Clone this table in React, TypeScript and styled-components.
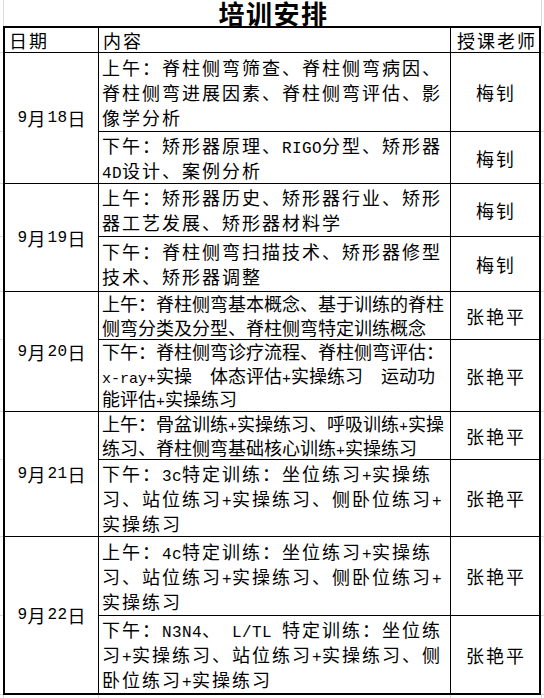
import React from 'react'
import styled, { createGlobalStyle } from 'styled-components'

const GRID = '#d9d9d9'
const CJK = '"Noto Sans CJK SC", "Noto Sans", sans-serif'

type Session = { lines: string[]; teacher: string; height: number; tight?: boolean }
type Day = { date: string; sessions: Session[] }

const days: Day[] = [
    {
        date: '9月18日',
        sessions: [
            { height: 78, teacher: '梅钊', lines: ['上午：脊柱侧弯筛查、脊柱侧弯病因、', '脊柱侧弯进展因素、脊柱侧弯评估、影', '像学分析'] },
            { height: 51, teacher: '梅钊', lines: ['下午：矫形器原理、RIGO分型、矫形器', '4D设计、案例分析'] },
        ],
    },
    {
        date: '9月19日',
        sessions: [
            { height: 52, teacher: '梅钊', lines: ['上午：矫形器历史、矫形器行业、矫形', '器工艺发展、矫形器材料学'] },
            { height: 54, teacher: '梅钊', lines: ['下午：脊柱侧弯扫描技术、矫形器修型', '技术、矫形器调整'] },
        ],
    },
    {
        date: '9月20日',
        sessions: [
            { height: 47, teacher: '张艳平', tight: true, lines: ['上午：脊柱侧弯基本概念、基于训练的脊柱', '侧弯分类及分型、脊柱侧弯特定训练概念'] },
            { height: 71, teacher: '张艳平', tight: true, lines: ['下午：脊柱侧弯诊疗流程、脊柱侧弯评估：', 'x-ray+实操  体态评估+实操练习  运动功', '能评估+实操练习'] },
        ],
    },
    {
        date: '9月21日',
        sessions: [
            { height: 47, teacher: '张艳平', tight: true, lines: ['上午：骨盆训练+实操练习、呼吸训练+实操', '练习、脊柱侧弯基础核心训练+实操练习'] },
            { height: 76, teacher: '张艳平', lines: ['下午：3c特定训练：坐位练习+实操练', '习、站位练习+实操练习、侧卧位练习+', '实操练习'] },
        ],
    },
    {
        date: '9月22日',
        sessions: [
            { height: 78, teacher: '张艳平', lines: ['上午：4c特定训练：坐位练习+实操练', '习、站位练习+实操练习、侧卧位练习+', '实操练习'] },
            { height: 77, teacher: '张艳平', lines: ['下午：N3N4、 L/TL 特定训练：坐位练', '习+实操练习、站位练习+实操练习、侧', '卧位练习+实操练习'] },
        ],
    },
]

const HEADER_H = 24
const sessionHeights = days.flatMap(d => d.sessions.map(s => s.height))

const GlobalStyle = createGlobalStyle`
    html, body {
        margin: 0;
        padding: 0;
        background: #fff;
    }
    body {
        font-family: ${CJK};
        color: #000;
    }
`

const Sheet = styled.div`
    width: 544px;
    height: 698px;
`

const Title = styled.div`
    box-sizing: border-box;
    margin-left: 3px;
    width: 539px;
    height: 26px;
    border-left: 1px solid ${GRID};
    border-right: 1px solid ${GRID};
    text-align: center;
    font-size: 26px;
    line-height: 26px;
    font-weight: 700;
    letter-spacing: 1.5px;
    padding-left: 2px;
`

const Middle = styled.div`
    display: flex;
`

const Gutter = styled.div`
    width: 3px;
    display: flex;
    flex-direction: column;
`

const GutterCell = styled.div<{ $h: number }>`
    box-sizing: border-box;
    height: ${p => p.$h}px;
    border-bottom: 1px solid ${GRID};
`

const Table = styled.div<{ $rows: string }>`
    display: grid;
    grid-template-columns: 93px 351px 88px;
    grid-template-rows: ${p => p.$rows};
    gap: 1px;
    background: #000;
    border: 2px solid #000;
`

const Cell = styled.div`
    background: #fff;
    font-size: 18px;
    letter-spacing: 2px;
    white-space: nowrap;
`

const HeadCell = styled(Cell)<{ $center?: boolean }>`
    display: flex;
    align-items: center;
    justify-content: ${p => (p.$center ? 'center' : 'flex-start')};
    padding-left: 4px;
    line-height: 24px;
`

const DateCell = styled(Cell)<{ $span: number }>`
    grid-row: span ${p => p.$span};
    display: flex;
    align-items: center;
    justify-content: center;
    padding-left: 2px;
`

const TeacherCell = styled(Cell)`
    display: flex;
    align-items: center;
    justify-content: center;
    padding-left: 2px;
`

const ContentCell = styled(Cell)<{ $tight?: boolean }>`
    display: flex;
    flex-direction: column;
    justify-content: center;
    padding-left: 3px;
    letter-spacing: ${p => (p.$tight ? '0px' : '2px')};
`

const Line = styled.div<{ $tight?: boolean }>`
    line-height: ${p => (p.$tight ? '23.5px' : '25px')};
    height: ${p => (p.$tight ? '23.5px' : '25px')};
    flex-shrink: 0;
`

const Half = styled.span<{ $tight?: boolean }>`
    font-family: "Liberation Mono", "DejaVu Sans Mono", monospace;
    font-size: ${p => (p.$tight ? '15px' : '16px')};
    letter-spacing: ${p => (p.$tight ? '0px' : '0.4px')};
    white-space: pre;
`

const Bottom = styled.div`
    box-sizing: border-box;
    margin-left: 3px;
    width: 539px;
    height: 3px;
    display: grid;
    grid-template-columns: 95px 352px 91px;
    border-left: 1px solid ${GRID};
`

const BottomCell = styled.div`
    border-right: 1px solid ${GRID};
`

function Runs({ text, tight }: { text: string; tight?: boolean }) {
    const parts = text.split(/([\x20-\x7e]+)/).filter(Boolean)
    return (
        <>
            {parts.map((p, i) =>
                /^[\x20-\x7e]+$/.test(p) ? (
                    <Half key={i} $tight={tight}>
                        {p}
                    </Half>
                ) : (
                    <React.Fragment key={i}>{p}</React.Fragment>
                )
            )}
        </>
    )
}

function GutterColumn() {
    const heights = [HEADER_H + 3, ...sessionHeights.map(h => h + 1)]
    heights[heights.length - 1] += 1
    return (
        <Gutter>
            {heights.map((h, i) => (
                <GutterCell key={i} $h={h} />
            ))}
        </Gutter>
    )
}

export default function App() {
    const rows = [HEADER_H, ...sessionHeights].map(h => `${h}px`).join(' ')
    return (
        <Sheet>
            <GlobalStyle />
            <Title>培训安排</Title>
            <Middle>
                <GutterColumn />
                <Table $rows={rows}>
                    <HeadCell>日期</HeadCell>
                    <HeadCell>内容</HeadCell>
                    <HeadCell $center>授课老师</HeadCell>
                    {days.map(day => (
                        <React.Fragment key={day.date}>
                            <DateCell $span={day.sessions.length}>
                                <Runs text={day.date} />
                            </DateCell>
                            {day.sessions.map((s, i) => (
                                <React.Fragment key={i}>
                                    <ContentCell $tight={s.tight}>
                                        {s.lines.map((l, j) => (
                                            <Line key={j} $tight={s.tight}>
                                                <Runs text={l} tight={s.tight} />
                                            </Line>
                                        ))}
                                    </ContentCell>
                                    <TeacherCell>{s.teacher}</TeacherCell>
                                </React.Fragment>
                            ))}
                        </React.Fragment>
                    ))}
                </Table>
                <GutterColumn />
            </Middle>
            <Bottom>
                <BottomCell />
                <BottomCell />
                <BottomCell />
            </Bottom>
        </Sheet>
    )
}
